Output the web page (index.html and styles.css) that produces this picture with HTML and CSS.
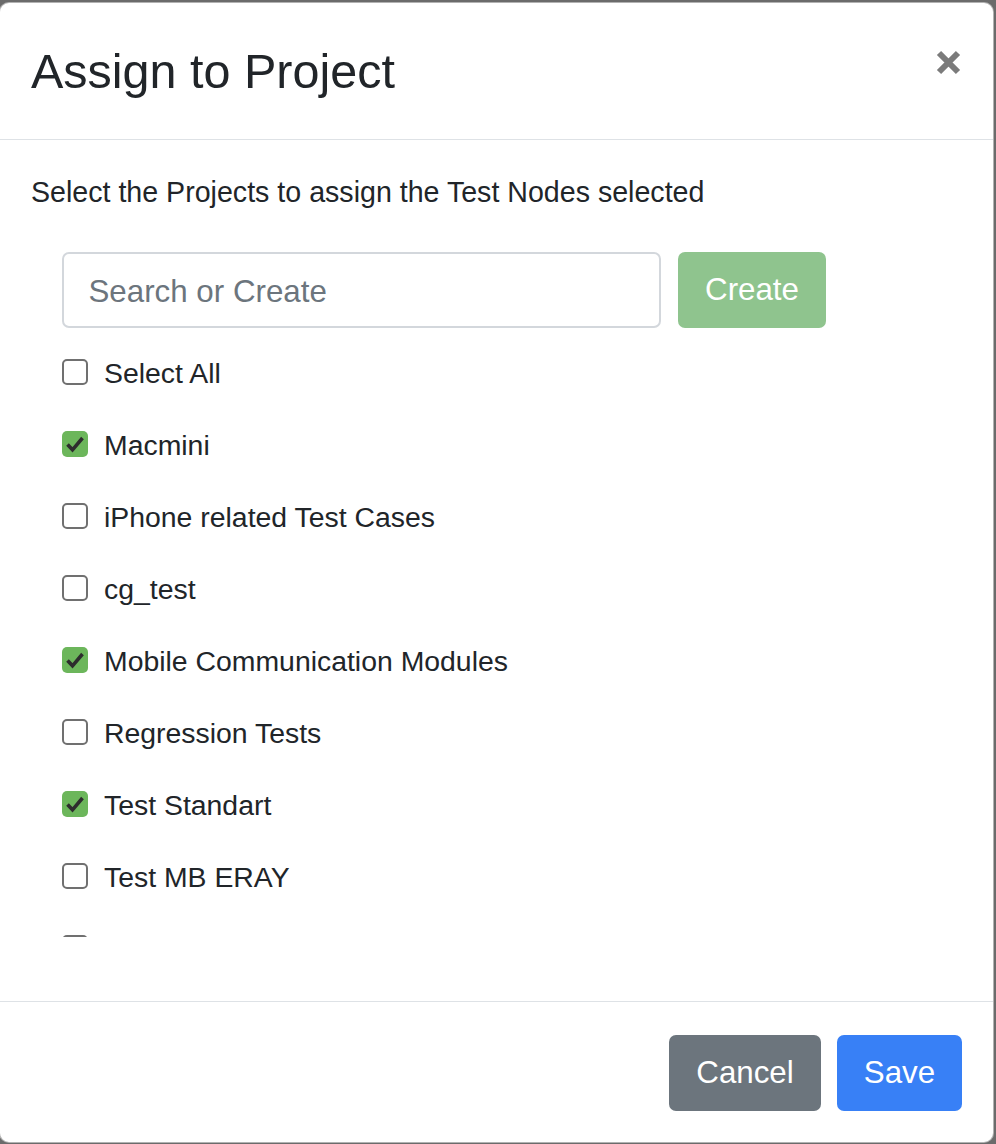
FILE: index.html
```html
<!DOCTYPE html>
<html lang="en">
<head>
<meta charset="utf-8">
<title>Assign to Project</title>
<link rel="stylesheet" href="styles.css">
</head>
<body>
<div class="page">
  <div class="modal">
    <div class="modal-header">
      <h3 class="modal-title">Assign to Project</h3>
      <button class="close" type="button" aria-label="Close">
        <svg width="25" height="25" viewBox="0 0 25 25"><path d="M3 3 L22 22 M22 3 L3 22" stroke="#7b7b7b" stroke-width="6" fill="none"/></svg>
      </button>
    </div>
    <div class="modal-body">
      <p class="intro">Select the Projects to assign the Test Nodes selected</p>
      <div class="search-row">
        <input class="search" type="text" placeholder="Search or Create">
        <button class="btn btn-create" type="button">Create</button>
      </div>
      <div class="list">
        <label class="row"><span class="box"></span><span class="lbl">Select All</span></label>
        <label class="row"><span class="box checked"><svg width="26" height="26" viewBox="0 0 26 26"><path d="M5.5 13.5 L10.5 18.8 L20.5 7" stroke="#2d2d2d" stroke-width="3.6" fill="none"/></svg></span><span class="lbl">Macmini</span></label>
        <label class="row"><span class="box"></span><span class="lbl">iPhone related Test Cases</span></label>
        <label class="row"><span class="box"></span><span class="lbl">cg_test</span></label>
        <label class="row"><span class="box checked"><svg width="26" height="26" viewBox="0 0 26 26"><path d="M5.5 13.5 L10.5 18.8 L20.5 7" stroke="#2d2d2d" stroke-width="3.6" fill="none"/></svg></span><span class="lbl">Mobile Communication Modules</span></label>
        <label class="row"><span class="box"></span><span class="lbl">Regression Tests</span></label>
        <label class="row"><span class="box checked"><svg width="26" height="26" viewBox="0 0 26 26"><path d="M5.5 13.5 L10.5 18.8 L20.5 7" stroke="#2d2d2d" stroke-width="3.6" fill="none"/></svg></span><span class="lbl">Test Standart</span></label>
        <label class="row"><span class="box"></span><span class="lbl">Test MB ERAY</span></label>
        <div class="row"><span class="box"></span></div>
      </div>
    </div>
    <div class="modal-footer">
      <button class="btn btn-cancel" type="button">Cancel</button>
      <button class="btn btn-save" type="button">Save</button>
    </div>
  </div>
</div>
</body>
</html>
```
FILE: styles.css
```css
html, body {
  margin: 0;
  padding: 0;
}
body {
  background: #6b6b6b;
  font-family: "Liberation Sans", Arial, Helvetica, sans-serif;
  color: #212529;
  overflow: hidden;
}
.page {
  padding: 2px 0 0 0;
  height: 1144px;
  box-sizing: border-box;
}
.modal {
  margin-left: -1px;
  width: 995px;
  height: 1141px;
  box-sizing: border-box;
  background: #fff;
  border: 1px solid rgba(0, 0, 0, 0.3);
  border-radius: 10px;
  display: flex;
  flex-direction: column;
  overflow: hidden;
}
.modal-header {
  display: flex;
  justify-content: space-between;
  align-items: flex-start;
  padding: 31.5px 32px 31.5px 31px;
  border-bottom: 1.75px solid #dee2e6;
}
.modal-title {
  margin: 0;
  font-size: 48.5px;
  font-weight: 400;
  line-height: 72.75px;
}
.close {
  margin-top: 15px;
  padding: 0;
  border: 0;
  background: transparent;
  width: 25px;
  height: 25px;
  display: block;
}
.close svg {
  display: block;
}
.modal-body {
  flex: 1;
  padding: 31.5px 31px 0 31px;
}
.intro {
  margin: 0 0 38.5px 0;
  font-size: 28.6px;
  line-height: 42.6px;
}
.search-row {
  display: flex;
  gap: 17px;
  padding-left: 31px;
}
.search {
  width: 599px;
  height: 75.5px;
  box-sizing: border-box;
  border: 2px solid #d3d7dc;
  border-radius: 7px;
  padding: 3px 24.5px 0 24.5px;
  font-family: "Liberation Sans", Arial, Helvetica, sans-serif;
  font-size: 31.3px;
  color: #495057;
  outline: none;
}
.search::placeholder {
  color: #6c757d;
}
.btn {
  border: 0;
  border-radius: 7px;
  font-family: "Liberation Sans", Arial, Helvetica, sans-serif;
  font-size: 31.3px;
  color: #fff;
  padding: 0 27px;
  height: 76px;
  line-height: 76px;
}
.btn-create {
  height: 75.5px;
  width: 148px;
  padding: 0;
  background: #8fc48e;
}
.list {
  margin-top: 9px;
  padding-left: 31px;
  height: 600px;
  overflow: hidden;
}
.row {
  display: flex;
  align-items: center;
  gap: 16px;
  height: 72px;
  font-size: 28.4px;
  line-height: 42.6px;
}
.box {
  width: 26px;
  height: 26px;
  box-sizing: border-box;
  border: 2px solid #707070;
  border-radius: 5px;
  background: #fff;
  flex: none;
  position: relative;
  top: -0.5px;
}
.box.checked {
  border: 0;
  background: #6cb65b;
}
.box svg {
  display: block;
}
.modal-footer {
  display: flex;
  justify-content: flex-end;
  gap: 16px;
  padding: 33px 31px 31px 31px;
  border-top: 1.75px solid #dee2e6;
}
.btn-cancel {
  background: #6c757d;
  width: 152px;
  padding: 0;
}
.btn-save {
  background: #3880f6;
  width: 125px;
  padding: 0;
}
```
